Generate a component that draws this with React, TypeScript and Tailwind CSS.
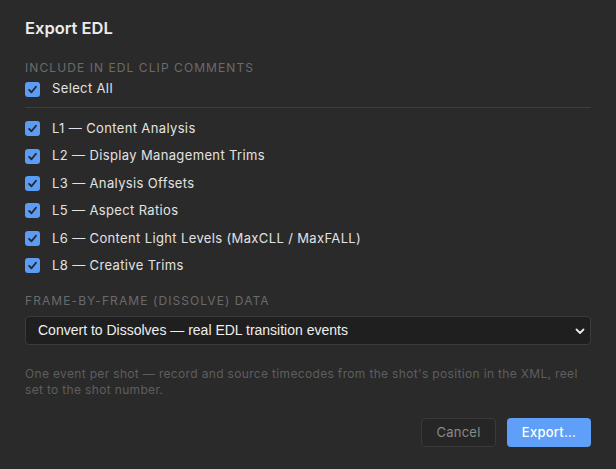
import React from "react";

const items = [
  "L1 — Content Analysis",
  "L2 — Display Management Trims",
  "L3 — Analysis Offsets",
  "L5 — Aspect Ratios",
  "L6 — Content Light Levels (MaxCLL / MaxFALL)",
  "L8 — Creative Trims",
];

function Check() {
  return (
    <span className="flex h-[15px] w-[15px] shrink-0 items-center justify-center rounded-[3px] bg-[#5b9cf4]">
      <svg width="11" height="11" viewBox="0 0 12 12" fill="none">
        <path d="M2.3 6.4 L4.9 9 L9.8 3" stroke="#262626" strokeWidth="2" strokeLinecap="round" strokeLinejoin="round" />
      </svg>
    </span>
  );
}

function Row({ label, h }: { label: string; h: string }) {
  return (
    <div className={`flex items-center gap-[12px] ${h}`}>
      <Check />
      <span className="text-[13px] tracking-[0.028em] text-[#e2e2e2]">{label}</span>
    </div>
  );
}

export default function App() {
  return (
    <div
      className="flex h-[469px] w-[616px] flex-col bg-[#2a2a2a] px-[25px] pt-[17px]"
      style={{ fontFamily: "Inter, 'Noto Sans', sans-serif" }}
    >
      <div className="text-[16.5px] font-semibold leading-[22px] text-[#ececec]">Export EDL</div>
      <div className="mt-[21px] text-[12px] leading-[16px] tracking-[0.09em] text-[#6a6a6a]">
        INCLUDE IN EDL CLIP COMMENTS
      </div>
      <div className="mt-[3px]">
        <Row label="Select All" h="h-[20px]" />
      </div>
      <div className="mt-[8px] h-px bg-[#3e3e3e]" />
      <div className="mt-[7px] flex flex-col">
        {items.map((it) => (
          <Row key={it} label={it} h="h-[27.4px]" />
        ))}
      </div>
      <div className="mt-[14px] text-[12px] leading-[16px] tracking-[0.09em] text-[#6a6a6a]">
        FRAME-BY-FRAME (DISSOLVE) DATA
      </div>
      <div className="mt-[7px] flex h-[29px] items-center justify-between rounded-[4px] border border-[#3c3c3c] bg-[#1f1f1f] pl-[12px] pr-[5px]">
        <span
          className="text-[14px] text-[#efefef]"
          style={{ fontFamily: "'Liberation Sans', Arial, sans-serif" }}
        >
          Convert to Dissolves — real EDL transition events
        </span>
        <svg width="10" height="8" viewBox="0 0 10 8" fill="none">
          <path d="M1.5 2.5 L5 6 L8.5 2.5" stroke="#e8e8e8" strokeWidth="1.8" strokeLinecap="round" strokeLinejoin="round" />
        </svg>
      </div>
      <div className="mt-[21px] text-[12px] leading-[16px] tracking-[0.028em] text-[#5e5e5e]">
        One event per shot — record and source timecodes from the shot's position in the XML, reel set to the shot number.
      </div>
      <div className="mt-[20px] flex justify-end gap-[11px]">
        <button className="flex h-[29px] w-[75px] items-center justify-center rounded-[4px] border border-[#3a3a3a] bg-[#262626] text-[13px] tracking-[0.02em] text-[#8a8a8a]">
          Cancel
        </button>
        <button className="flex h-[29px] w-[84px] items-center justify-center rounded-[4px] bg-[#5f9ff8] text-[13px] font-medium tracking-[0.02em] text-white">
          Export…
        </button>
      </div>
    </div>
  );
}
